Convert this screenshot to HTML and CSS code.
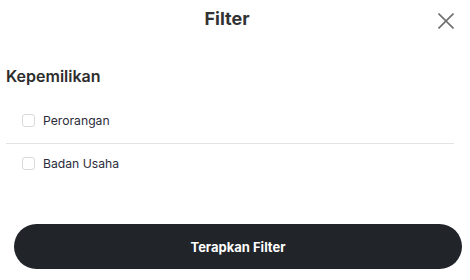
FILE: index.html
```
<!DOCTYPE html>
<html lang="id">
<head>
<meta charset="utf-8">
<title>Filter</title>
<link rel="stylesheet" href="styles.css">
</head>
<body>
<div class="sheet">
  <header class="sheet-header">
    <span></span>
    <h1 class="sheet-title">Filter</h1>
    <button class="close-btn" aria-label="Tutup">
      <svg width="16" height="16" viewBox="0 0 16 16"><path d="M0.5 0.5 L15.5 15.5 M15.5 0.5 L0.5 15.5" stroke="#6f6f6f" stroke-width="1.6" fill="none"/></svg>
    </button>
  </header>
  <section class="group">
    <h2 class="group-title">Kepemilikan</h2>
    <ul class="options">
      <li class="option"><span class="check"></span><span class="label">Perorangan</span></li>
      <li class="option"><span class="check"></span><span class="label">Badan Usaha</span></li>
    </ul>
  </section>
  <footer class="sheet-footer">
    <button class="apply-btn">Terapkan Filter</button>
  </footer>
</div>
</body>
</html>
```
FILE: styles.css
```
* { box-sizing: border-box; }
html, body { margin: 0; padding: 0; background: #fff; }
body { font-family: Inter, "Noto Sans", sans-serif; color: #333; }
.sheet { width: 470px; }
.sheet-header {
  display: grid;
  grid-template-columns: 1fr auto 1fr;
  align-items: start;
  padding: 8px 16px 0 0;
}
.sheet-title {
  margin: 0;
  font-size: 18px;
  line-height: 22px;
  font-weight: 700;
  color: #333;
}
.close-btn {
  justify-self: end;
  margin-top: 5px;
  padding: 0;
  border: 0;
  background: none;
  width: 16px;
  height: 16px;
  display: flex;
}
.group { padding: 0 16px 0 6px; margin-top: 36px; }
.group-title {
  margin: 0;
  font-size: 16px;
  line-height: 20px;
  font-weight: 600;
  color: #2d2d2d;
}
.options { list-style: none; margin: 15px 0 0; padding: 0; }
.option {
  display: flex;
  align-items: center;
  padding: 9px 0 12px 16px;
  height: 42px;
}
.option + .option { border-top: 1px solid #e3e3e3; height: 43px; }
.check {
  width: 13px;
  height: 13px;
  border: 1px solid #dadada;
  border-radius: 3px;
  margin-right: 8px;
  flex: none;
}
.label { font-size: 12.2px; line-height: 21px; color: #2c2b3a; }
.sheet-footer { padding: 0 8px 0 14px; margin-top: 38px; }
.apply-btn {
  display: block;
  width: 100%;
  height: 45px;
  border: 0;
  border-radius: 23px;
  background: #212429;
  color: #fff;
  font-family: Inter, "Noto Sans", sans-serif;
  font-size: 13px;
  font-weight: 700;
}
```
